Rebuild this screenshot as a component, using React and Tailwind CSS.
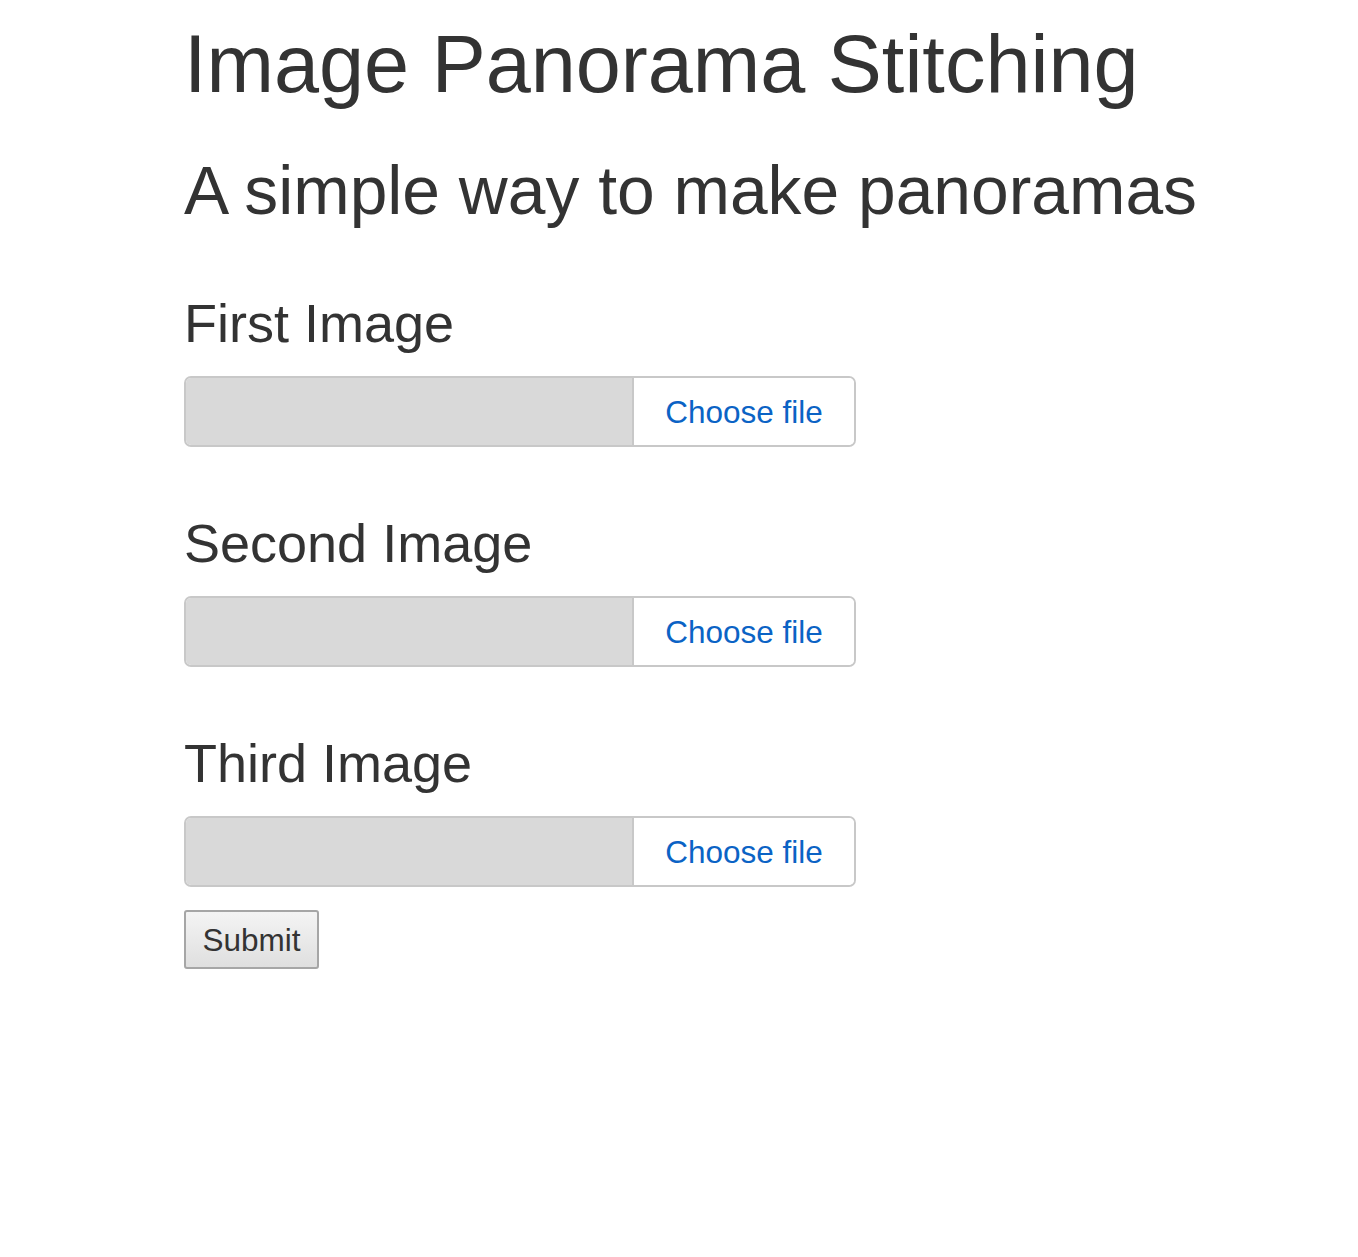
import React from 'react';

const fields = ['First Image', 'Second Image', 'Third Image'];

function FileInput() {
    return (
        <div className="flex w-[672px] h-[71px] border-2 border-[#c8c8c8] rounded-[7px] overflow-hidden">
            <div className="flex-1 bg-[#d9d9d9]"></div>
            <div className="w-[222px] flex items-center justify-center pt-[3px] bg-white border-l-2 border-[#c8c8c8] text-[31.5px] text-[#0b63c5]">
                Choose file
            </div>
        </div>
    );
}

export default function App() {
    return (
        <div className="min-h-screen bg-white text-[#333333] font-['Liberation_Sans',Arial,sans-serif]">
            <div className="pl-[184px] pt-[20px]">
                {/* Header */}
                <h1 className="text-[81px] leading-[89px] font-normal">Image Panorama Stitching</h1>
                <h2 className="mt-[45px] text-[67.75px] leading-[74px] font-normal">A simple way to make panoramas</h2>

                {/* Upload form */}
                <form className="mt-[66px]" onSubmit={(e) => e.preventDefault()}>
                    {fields.map((label, i) => (
                        <div key={label} className={i > 0 ? 'mt-[67px]' : ''}>
                            <h3 className="text-[54px] leading-[59px] font-normal">{label}</h3>
                            <div className="mt-[23px]">
                                <FileInput />
                            </div>
                        </div>
                    ))}
                    <button
                        type="submit"
                        className="mt-[23px] w-[135px] h-[59px] pt-[3px] border-2 border-[#a6a6a6] rounded-[3px] bg-gradient-to-b from-[#f4f4f4] to-[#dfdfdf] text-[31.5px] text-[#333333]"
                    >
                        Submit
                    </button>
                </form>
            </div>
        </div>
    );
}
